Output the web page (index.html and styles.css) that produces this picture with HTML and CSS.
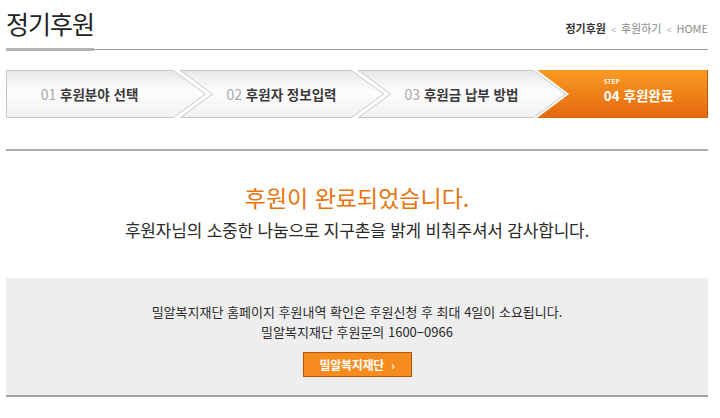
FILE: index.html
```html
<!DOCTYPE html>
<html lang="ko">
<head>
  <meta charset="UTF-8" />
  <meta name="viewport" content="width=device-width, initial-scale=1.0"/>
  <title>정기후원 - 후원완료</title>
  <link rel="stylesheet" href="styles.css">
</head>
<body>
  <div class="page">
    <!-- 상단 타이틀 -->
    <div class="header">
      <h1 class="title">정기후원</h1>
      <div class="location">
        <strong>정기후원</strong><span class="sep">&lt;</span><span>후원하기</span><span class="sep">&lt;</span><span>HOME</span>
      </div>
    </div>

    <!-- 단계 표시 -->
    <div class="steps">
      <svg class="steps-bg" width="702" height="48" viewBox="0 0 702 48">
        <defs>
          <linearGradient id="gGray" x1="0" y1="0" x2="0" y2="1">
            <stop offset="0" stop-color="#e8e8e8"/>
            <stop offset="0.45" stop-color="#fdfdfd"/>
            <stop offset="1" stop-color="#f1f1f1"/>
          </linearGradient>
          <linearGradient id="gOrange" x1="0" y1="0" x2="0" y2="1">
            <stop offset="0" stop-color="#f99a22"/>
            <stop offset="1" stop-color="#e4680f"/>
          </linearGradient>
        </defs>
        <polygon points="0.5,0.5 167.5,0.5 199.5,24 167.5,47.5 0.5,47.5" fill="url(#gGray)" stroke="#c6c6c6"/>
        <polygon points="174.5,0.5 345.5,0.5 377.5,24 345.5,47.5 174.5,47.5 206.5,24" fill="url(#gGray)" stroke="#c6c6c6"/>
        <polygon points="352.5,0.5 527.5,0.5 559.5,24 527.5,47.5 352.5,47.5 384.5,24" fill="url(#gGray)" stroke="#c6c6c6"/>
        <polygon points="531,0 702,0 702,48 531,48 563,24" fill="url(#gOrange)"/>
        <line x1="701.5" y1="0" x2="701.5" y2="48" stroke="#c2560a"/>
      </svg>
      <div class="step step-first"><span class="num">01</span> 후원분야 선택</div>
      <div class="step"><span class="num">02</span> 후원자 정보입력</div>
      <div class="step step-third"><span class="num">03</span> 후원금 납부 방법</div>
      <div class="step step-on">
        <div class="step-inner">
          <span class="step-label">STEP</span>
          <span>04 후원완료</span>
        </div>
      </div>
    </div>

    <!-- 완료 메시지 -->
    <div class="complete">
      <h2 class="complete-title">후원이 완료되었습니다.</h2>
      <p class="complete-text">후원자님의 소중한 나눔으로 지구촌을 밝게 비춰주셔서 감사합니다.</p>
    </div>

    <!-- 안내 박스 -->
    <div class="info-box">
      <p>밀알복지재단 홈페이지 후원내역 확인은 후원신청 후 최대 4일이 소요됩니다.</p>
      <p>밀알복지재단 후원문의 1600−0966</p>
      <a href="#" class="btn-go">밀알복지재단 <span class="arrow">›</span></a>
    </div>
  </div>
</body>
</html>
```

FILE: styles.css
```css
body {
  margin: 0;
  background: #ffffff;
  font-family: "Noto Sans CJK KR", "Noto Sans", sans-serif;
  color: #333;
}

.page {
  width: 702px;
  margin-left: 6px;
}

/* 상단 타이틀 */
.header {
  display: flex;
  justify-content: space-between;
  height: 49px;
  border-bottom: 1px solid #9a9a9a;
}

.title {
  margin: 0 0 -2px 0;
  display: flex;
  align-items: center;
  padding-bottom: 2px;
  font-size: 25px;
  font-weight: normal;
  letter-spacing: -1px;
  color: #222;
  border-bottom: 3px solid #b4b4b4;
}

.location {
  align-self: center;
  margin-top: 6px;
  font-size: 11px;
  color: #8a8a8a;
}

.location strong {
  color: #333;
}

.location .sep {
  font-size: 9px;
  color: #aaa;
  margin: 0 5px;
}

/* 단계 표시 */
.steps {
  position: relative;
  display: grid;
  grid-template-columns: 174px 178px 179px 171px;
  height: 48px;
  margin-top: 20px;
}

.steps-bg {
  position: absolute;
  left: 0;
  top: 0;
}

.step {
  position: relative;
  display: flex;
  align-items: center;
  justify-content: center;
  padding: 0 7px 0 32px;
  font-size: 13.5px;
  font-weight: bold;
  color: #3a3a3a;
  white-space: pre;
}

.step-first {
  padding-left: 0;
}

.step-third {
  padding-right: 4px;
}

.step .num {
  font-weight: normal;
  color: #a8a8a8;
  font-size: 14px;
}

.step-on {
  padding-right: 0;
  color: #ffffff;
}

.step-inner {
  display: flex;
  flex-direction: column;
  padding-bottom: 5px;
}

.step-label {
  font-size: 6px;
  line-height: 7px;
  letter-spacing: 0.2px;
}

/* 완료 메시지 */
.complete {
  margin-top: 31px;
  border-top: 2px solid #a9a9a9;
  text-align: center;
  padding: 31px 0 36px;
}

.complete-title {
  margin: 0;
  font-size: 23px;
  line-height: 30px;
  font-weight: normal;
  color: #e8740e;
}

.complete-text {
  margin: 6px 0 0;
  font-size: 17px;
  line-height: 24px;
  color: #2a2a2a;
  letter-spacing: -0.2px;
}

/* 안내 박스 */
.info-box {
  background-color: #eeeeee;
  border-bottom: 2px solid #a4a4a4;
  text-align: center;
  padding: 24px 0 18px;
}

.info-box p {
  margin: 0;
  font-size: 13px;
  line-height: 20px;
  color: #2a2a2a;
}

.btn-go {
  display: inline-flex;
  align-items: center;
  justify-content: center;
  width: 107px;
  height: 23px;
  margin-top: 10px;
  background-color: #f68b1e;
  border: 1px solid #b8560c;
  color: #ffffff;
  font-size: 12px;
  font-weight: bold;
  text-decoration: none;
  letter-spacing: -0.3px;
}

.btn-go .arrow {
  margin-left: 7px;
  font-size: 12px;
}
```
